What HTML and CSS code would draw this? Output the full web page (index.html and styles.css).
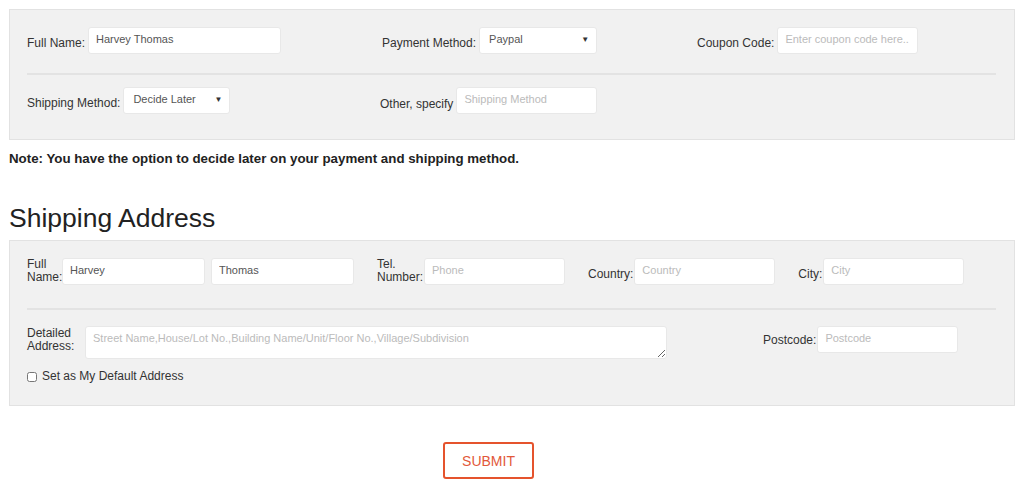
FILE: index.html
```html
<!DOCTYPE html>
<html lang="en">
<head>
    <meta charset="UTF-8">
    <meta name="viewport" content="width=device-width, initial-scale=1.0">
    <title>Checkout</title>
    <link rel="stylesheet" href="styles.css">
</head>
<body>

    <div class="panel panel-top">
        <div class="row3">
            <div class="field">
                <label>Full Name:</label>
                <input class="w-name" type="text" value="Harvey Thomas">
            </div>
            <div class="field shift">
                <label>Payment Method:</label>
                <span class="select w-pay">
                    <select>
                        <option>Paypal</option>
                        <option>Credit Card</option>
                        <option>Cash on Delivery</option>
                    </select>
                </span>
            </div>
            <div class="field">
                <label>Coupon Code:</label>
                <input class="w-std" type="text" placeholder="Enter coupon code here..">
            </div>
        </div>

        <hr class="divider">

        <div class="row3">
            <div class="field">
                <label>Shipping Method:</label>
                <span class="select w-ship">
                    <select>
                        <option>Decide Later</option>
                        <option>Standard</option>
                        <option>Express</option>
                    </select>
                </span>
            </div>
            <div class="field">
                <label class="label-other">Other, specify</label>
                <input class="w-std" type="text" placeholder="Shipping Method">
            </div>
        </div>
    </div>

    <p class="note">Note: You have the option to decide later on your payment and shipping method.</p>

    <h1 class="title">Shipping Address</h1>

    <div class="panel panel-address">
        <div class="row-flex">
            <div class="field">
                <label class="lbl-name">Full Name:</label>
                <input class="w-half" type="text" value="Harvey">
                <input class="w-half second" type="text" value="Thomas">
            </div>
            <div class="field">
                <label class="lbl-tel">Tel. Number:</label>
                <input class="w-std" type="text" placeholder="Phone">
            </div>
            <div class="field">
                <label class="tight">Country:</label>
                <input class="w-std" type="text" placeholder="Country">
            </div>
            <div class="field">
                <label class="tight">City:</label>
                <input class="w-std" type="text" placeholder="City">
            </div>
        </div>

        <hr class="divider divider-address">

        <div class="row-flex row-detail">
            <div class="field field-top">
                <label class="lbl-detail">Detailed Address:</label>
                <textarea placeholder="Street Name,House/Lot No.,Building Name/Unit/Floor No.,Village/Subdivision"></textarea>
            </div>
            <div class="field field-top postcode">
                <label class="tight lbl-post">Postcode:</label>
                <input class="w-std" type="text" placeholder="Postcode">
            </div>
        </div>

        <div class="check-row">
            <input type="checkbox" id="defaultAddress">
            <label for="defaultAddress">Set as My Default Address</label>
        </div>
    </div>

    <div class="actions">
        <button class="btn-submit" type="button">SUBMIT</button>
    </div>

</body>
</html>
```

FILE: styles.css
```css
body {
    font-family: "Liberation Sans", Arial, sans-serif;
    color: #333;
    margin: 9px;
    background: #fff;
}

.panel {
    background-color: #f1f1f1;
    border: 1px solid #e2e2e2;
    padding: 17px 17px 0 17px;
    box-sizing: border-box;
    width: 1006px;
}

.panel-top {
    height: 131px;
}

.panel-address {
    height: 166px;
}

.row3 {
    display: grid;
    grid-template-columns: 353px 317px 1fr;
    align-items: end;
}

.field {
    display: flex;
    align-items: flex-end;
}

.shift {
    padding-left: 2px;
}

label {
    font-size: 12px;
    line-height: 13px;
    color: #333;
    margin-right: 3px;
    padding-bottom: 4px;
}

.label-other {
    padding-bottom: 3px;
}

label.tight {
    margin-right: 1px;
}

input[type="text"],
select,
textarea {
    font-family: "Liberation Sans", Arial, sans-serif;
    font-size: 11px;
    color: #555;
    background: #fff;
    border: 1px solid #e8e8e8;
    border-radius: 3px;
    height: 27px;
    box-sizing: border-box;
    padding: 0 7px 3px 7px;
    outline: none;
}

input::placeholder,
textarea::placeholder {
    color: #bbb;
}

.w-name { width: 193px; }
.w-std { width: 141px; }
.w-half { width: 143px; }
.second { margin-left: 6px; }

.select {
    position: relative;
    display: inline-block;
}

.select select {
    appearance: none;
    -webkit-appearance: none;
    width: 100%;
    padding-left: 9px;
}

.select::after {
    content: "\25BC";
    position: absolute;
    right: 8px;
    top: 8px;
    font-size: 8px;
    color: #333;
    pointer-events: none;
}

.w-pay { width: 118px; }
.w-ship { width: 107px; }

.divider {
    border: 0;
    height: 2px;
    background-color: #e3e3e3;
    margin: 19px 1px 12px 0;
}

.divider-address {
    margin: 23px 1px 16px 0;
}

.note {
    font-size: 13.3px;
    font-weight: bold;
    color: #222;
    margin: 12px 0 0 0;
    line-height: 14px;
}

.title {
    font-size: 26.5px;
    font-weight: normal;
    color: #222;
    margin: 38px 0 8px 0;
    line-height: 28px;
}

.row-flex {
    display: flex;
    gap: 23px;
    align-items: flex-end;
}

.lbl-name {
    width: 31px;
    margin-right: 4px;
    padding-bottom: 1px;
}

.lbl-tel {
    width: 43px;
    margin-right: 4px;
    padding-bottom: 1px;
}

.row-detail {
    gap: 0;
    align-items: flex-start;
}

.field-top {
    align-items: flex-start;
}

.lbl-detail {
    width: 54px;
    margin-right: 4px;
    padding-top: 1px;
}

textarea {
    width: 582px;
    height: 33px;
    padding: 5px 7px;
    resize: vertical;
    display: block;
}

.postcode {
    margin-left: 96px;
}

.lbl-post {
    padding-top: 8px;
}

.check-row {
    display: flex;
    align-items: center;
    margin-top: 11px;
}

.check-row input {
    width: 10px;
    height: 10px;
    margin: 0 5px 0 0;
}

.check-row label {
    padding: 0;
    margin: 0;
    font-size: 12px;
}

.actions {
    padding: 36px 0 0 434px;
}

.btn-submit {
    width: 91px;
    height: 37px;
    background: #fff;
    border: 2px solid #e5532d;
    border-radius: 3px;
    color: #e2583a;
    font-family: "Liberation Sans", Arial, sans-serif;
    font-size: 14px;
    padding: 0;
}
```
